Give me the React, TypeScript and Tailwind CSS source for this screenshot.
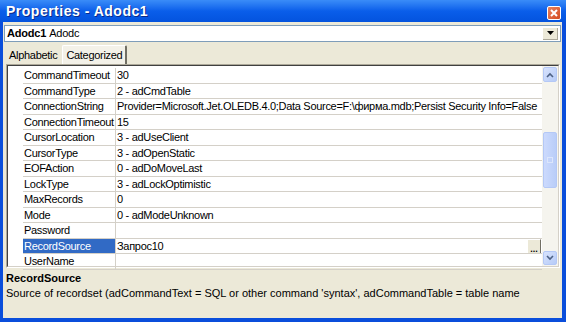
import React from "react";

// строки свойств, как в окне VB6
const rows: { name: string; value: string; selected?: boolean; button?: boolean }[] = [
  { name: "CommandTimeout", value: "30" },
  { name: "CommandType", value: "2 - adCmdTable" },
  {
    name: "ConnectionString",
    value:
      "Provider=Microsoft.Jet.OLEDB.4.0;Data Source=F:\\фирма.mdb;Persist Security Info=False",
  },
  { name: "ConnectionTimeout", value: "15" },
  { name: "CursorLocation", value: "3 - adUseClient" },
  { name: "CursorType", value: "3 - adOpenStatic" },
  { name: "EOFAction", value: "0 - adDoMoveLast" },
  { name: "LockType", value: "3 - adLockOptimistic" },
  { name: "MaxRecords", value: "0" },
  { name: "Mode", value: "0 - adModeUnknown" },
  { name: "Password", value: "" },
  { name: "RecordSource", value: "Запрос10", selected: true, button: true },
  { name: "UserName", value: "" },
];

function Chevron({ up }: { up?: boolean }) {
  return (
    <svg width="8" height="6" viewBox="0 0 8 6">
      <path
        d={up ? "M1 5 L4 2 L7 5" : "M1 1 L4 4 L7 1"}
        fill="none"
        stroke="#4D6185"
        strokeWidth="1.6"
      />
    </svg>
  );
}

function ScrollBar() {
  return (
    <div className="w-[16px] shrink-0 flex flex-col bg-[#F5F4EE] pt-[1px] pb-[1px]">
      <div className="h-[15px] mx-[1px] rounded-[2px] border border-[#B4C8F6] bg-gradient-to-br from-[#D8E3FD] to-[#B6CBF7] flex items-center justify-center">
        <Chevron up />
      </div>
      <div className="h-[50px]" />
      <div className="h-[56px] mx-[1px] rounded-[2px] border border-[#B4C8F6] bg-gradient-to-r from-[#CCDAFD] to-[#B9CDF8] flex items-center justify-center">
        <div className="w-[6px] h-[6px] border border-[#DCE6FC]" />
      </div>
      <div className="flex-1" />
      <div className="h-[14px] mx-[1px] rounded-[2px] border border-[#B4C8F6] bg-gradient-to-br from-[#D8E3FD] to-[#B6CBF7] flex items-center justify-center">
        <Chevron />
      </div>
    </div>
  );
}

export default function App() {
  return (
    <div className="w-[566px] h-[322px] bg-[#0A4EDB] flex flex-col font-['Liberation_Sans',Arial,sans-serif] text-black overflow-hidden">
      {/* заголовок окна */}
      <div className="h-[22px] shrink-0 flex items-center justify-between pl-[6px] pr-[5px] bg-gradient-to-b from-[#3A8CF8] via-[#0A5EEA] to-[#0453DE]">
        <span className="text-white font-bold text-[14px] tracking-[0.5px] [text-shadow:1px_1px_0_#0A2A8A]">
          Properties - Adodc1
        </span>
        <div className="w-[14px] h-[14px] mt-[4px] rounded-[2px] border border-white bg-gradient-to-br from-[#E9815D] to-[#D44A1C] flex items-center justify-center">
          <svg width="8" height="8" viewBox="0 0 8 8">
            <path d="M1 1 L7 7 M7 1 L1 7" stroke="white" strokeWidth="2" />
          </svg>
        </div>
      </div>

      <div className="flex-1 ml-[3px] mr-[4px] mb-[4px] bg-[#ECE9D8] flex flex-col">
        {/* комбобокс объекта */}
        <div className="mt-[3px] ml-[1px] mr-[1px] h-[17px] border border-[#7F9DB9] bg-white flex items-center text-[11px] tracking-[-0.2px]">
          <span className="pl-[2px] font-bold">Adodc1</span>
          <span className="pl-[3px] flex-1">Adodc</span>
          <div className="w-[15px] h-[12px] mr-[2px] bg-[#ECE9D8] border-r border-b border-[#ACA899] flex items-center justify-center">
            <svg width="7" height="4" viewBox="0 0 7 4">
              <path d="M0 0 H7 L3.5 4 Z" fill="black" />
            </svg>
          </div>
        </div>

        {/* вкладки */}
        <div className="h-[20px] mt-[2px] flex items-end pl-[2px] text-[11px] tracking-[-0.3px]">
          <div className="h-[17px] pl-[4px] pr-[5px] flex items-center">Alphabetic</div>
          <div className="h-[19px] px-[3px] flex items-center bg-[#F3F1E8] border-t border-l border-white border-r-2 border-r-[#716F64] rounded-t-[2px]">
            Categorized
          </div>
        </div>

        {/* сетка свойств */}
        <div className="ml-[3px] mr-[2px] h-[204px] border border-t-[#ACA899] border-l-[#ACA899] border-r-white border-b-white">
          <div className="h-full border border-t-[#404040] border-l-[#404040] border-r-[#D4D0C8] border-b-[#D4D0C8] bg-white flex text-[11px] tracking-[-0.3px]">
            <div className="flex-1 min-w-0 flex flex-col pt-[2px]">
              {rows.map((r, i) => (
                <div
                  key={r.name}
                  className={`flex ${i % 2 === 0 ? "h-[16px]" : "h-[15px]"}`}
                >
                  <div className="w-[15px] shrink-0" />
                  <div
                    className={`w-[93px] shrink-0 pl-[1px] flex items-center border-r border-b border-[#D4D0C8] whitespace-nowrap overflow-hidden ${
                      r.selected ? "bg-[#316AC5] text-white" : ""
                    }`}
                  >
                    {r.name}
                  </div>
                  <div className="flex-1 min-w-0 flex items-center pl-[1px] border-b border-[#D4D0C8] whitespace-nowrap overflow-hidden">
                    <span className="flex-1 min-w-0 overflow-hidden">{r.value}</span>
                    {r.button && (
                      <div className="w-[14px] h-[16px] mr-[1px] shrink-0 self-start bg-[#ECE9D8] border border-t-white border-l-white border-r-[#716F64] border-b-[#716F64] flex items-end justify-center text-[9px] font-bold leading-[10px] tracking-normal">
                        ...
                      </div>
                    )}
                  </div>
                </div>
              ))}
            </div>
            <ScrollBar />
          </div>
        </div>

        {/* описание */}
        <div className="flex-1 pl-[3px] pt-[3px] text-[11px] leading-[15px]">
          <div className="font-bold">RecordSource</div>
          <div>
            Source of recordset (adCommandText = SQL or other command 'syntax', adCommandTable = table name
          </div>
        </div>
      </div>
    </div>
  );
}
